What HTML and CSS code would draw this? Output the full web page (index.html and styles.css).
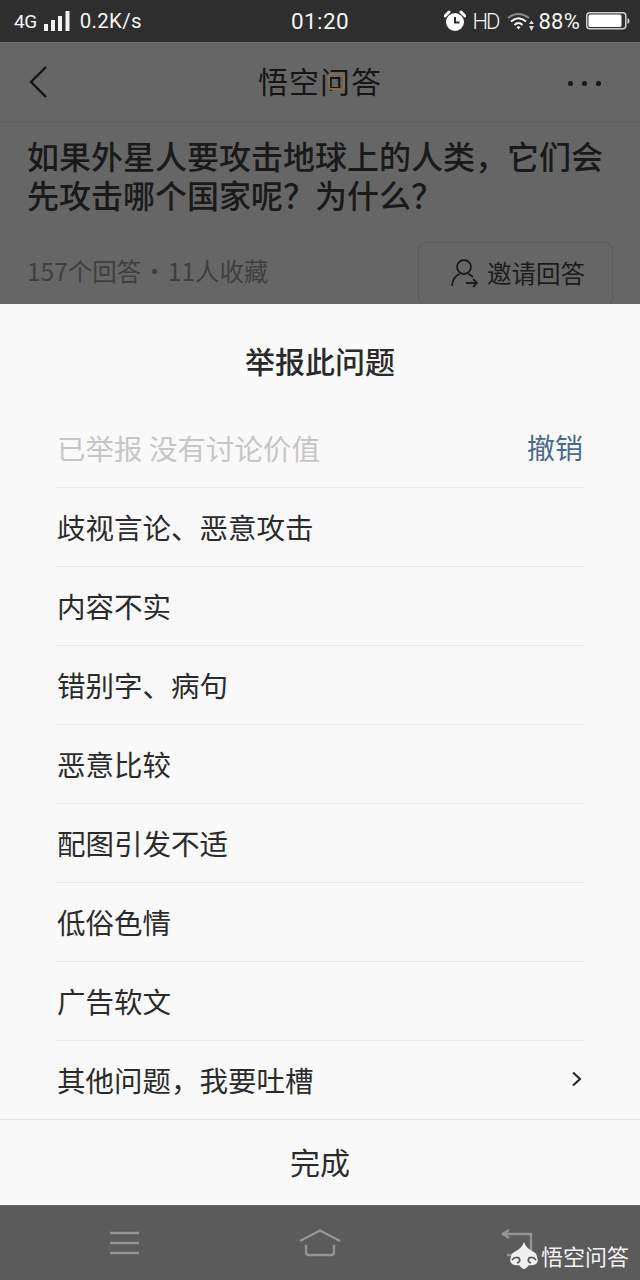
FILE: index.html
```html
<!DOCTYPE html>
<html lang="zh-CN">
<head>
  <meta charset="UTF-8" />
  <title>举报此问题</title>
  <link rel="stylesheet" href="styles.css">
</head>
<body>

  <div class="status-bar">
    <div class="status-left">
      <span class="net">4G</span>
      <svg class="signal" width="26" height="20" viewBox="0 0 26 20" fill="#f2f2f2">
        <rect x="0" y="13" width="4" height="7"/>
        <rect x="7" y="9" width="4" height="11"/>
        <rect x="14" y="5" width="4" height="15"/>
        <rect x="21.500" y="0" width="4" height="20"/>
      </svg>
      <span class="speed">0.2K/s</span>
    </div>
    <div class="clock">01:20</div>
    <div class="status-right">
      <svg class="alarm" width="22" height="22" viewBox="0 0 22 22">
        <circle cx="11" cy="12" r="9" fill="#fff"/>
        <path d="M1 6 L5 2 M21 6 L17 2" stroke="#fff" stroke-width="3" stroke-linecap="round"/>
        <path d="M11 7 V12.5 H15.5" stroke="#2e2e2e" stroke-width="2" fill="none"/>
      </svg>
      <span class="hd">HD</span>
      <svg class="wifi" width="27" height="20" viewBox="0 0 27 20" fill="none">
        <path d="M1 7 Q11 -1 22 7" stroke="#8a8a8a" stroke-width="2"/>
        <path d="M4 10.5 Q11.500 4 19 10.500" stroke="#fff" stroke-width="2"/>
        <path d="M7.500 14 Q11.500 10 15.500 14" stroke="#fff" stroke-width="2"/>
        <path d="M9.500 16 L11.500 18.500 L13.500 16 Q11.500 14.500 9.500 16 Z" fill="#fff"/>
        <path d="M24.500 9.500 L27 13 H22 Z M24.500 20 L27 15 H22 Z" fill="#ddd"/>
      </svg>
      <span class="battery-text">88%</span>
      <svg class="battery" width="44" height="20" viewBox="0 0 44 20">
        <rect x="0.750" y="1.750" width="39" height="16" rx="3" fill="none" stroke="#cfcfcf" stroke-width="1.500"/>
        <rect x="2.500" y="3.500" width="33" height="12.500" rx="1.500" fill="#fff"/>
        <path d="M41.500 7 Q43.500 7.500 43.500 10 Q43.500 12.500 41.500 13 Z" fill="#cfcfcf"/>
      </svg>
    </div>
  </div>

  <div class="backdrop">
    <div class="topbar">
      <svg class="back" width="20" height="34" viewBox="0 0 20 34" fill="none">
        <path d="M18 2 L3 17 L18 32" stroke="#161616" stroke-width="2.400"/>
      </svg>
      <div class="wordmark">悟空<span class="wen">问</span>答</div>
      <div class="more"><i></i><i></i><i></i></div>
    </div>
    <div class="question">
      <h1>如果外星人要攻击地球上的人类，它们会先攻击哪个国家呢？为什么？</h1>
      <div class="question-meta">
        <span class="counts">157个回答<b class="dot">·</b>11人收藏</span>
        <div class="invite">
          <svg width="28" height="30" viewBox="0 0 28 30" fill="none" stroke="#1c1c1c" stroke-width="1.800">
            <circle cx="13" cy="9" r="7"/>
            <path d="M1 28 Q2 18 9 16 M17 16 Q20 17 22 19"/>
            <path d="M15 25 H26 M22 21 L26 25 L22 29"/>
          </svg>
          <span>邀请回答</span>
        </div>
      </div>
    </div>
  </div>

  <div class="sheet">
    <h2>举报此问题</h2>
    <ul class="reasons">
      <li class="reported"><span>已举报 没有讨论价值</span><a class="undo">撤销</a></li>
      <li>歧视言论、恶意攻击</li>
      <li>内容不实</li>
      <li>错别字、病句</li>
      <li>恶意比较</li>
      <li>配图引发不适</li>
      <li>低俗色情</li>
      <li>广告软文</li>
      <li>
        <span>其他问题，我要吐槽</span>
        <svg class="chevron" width="12" height="16" viewBox="0 0 12 16" fill="none">
          <path d="M2 1.500 L9 8 L2 14.500" stroke="#222" stroke-width="2"/>
        </svg>
      </li>
    </ul>
    <div class="done">完成</div>
  </div>

  <div class="softkeys">
    <svg class="key-menu" width="30" height="24" viewBox="0 0 30 24" stroke="#949494" stroke-width="2.400">
      <path d="M0 2 H29 M0 12 H29 M0 22 H29"/>
    </svg>
    <svg class="key-home" width="44" height="28" viewBox="0 0 44 28" fill="none" stroke="#949494" stroke-width="2.400">
      <path d="M1 12 L21 1.500 L41 12"/>
      <path d="M7 16 V23 Q7 26 10 26 H32 Q35 26 35 23 V16"/>
    </svg>
    <svg class="key-back" width="32" height="28" viewBox="0 0 32 28" fill="none" stroke="#949494" stroke-width="2.400">
      <path d="M1 5 H30 V26 H6"/>
      <path d="M8 1 L2 5 L8 9"/>
    </svg>
    <div class="watermark">
      <svg width="30" height="28" viewBox="0 0 30 28">
        <path d="M15 1 Q17 7 23 10 Q28 12 28 16 Q30 20 27 23 Q24 25 20 24 Q17 28 15 28 Q13 28 10 24 Q6 25 3 23 Q0 20 2 16 Q2 12 7 10 Q13 7 15 1 Z" fill="#f0f0f0"/>
        <path d="M3 19 Q6 15 10 17 Q12 21 8 22 M27 19 Q24 15 20 17 Q18 21 22 22" fill="none" stroke="#5b5b5b" stroke-width="1.800"/>
      </svg>
      <span>悟空问答</span>
    </div>
  </div>

</body>
</html>
```

FILE: styles.css
```css
* {
  box-sizing: border-box;
}

html, body {
  margin: 0;
  padding: 0;
}

body {
  width: 640px;
  height: 1280px;
  overflow: hidden;
  display: flex;
  flex-direction: column;
  font-family: "Noto Sans CJK SC", "Noto Sans", sans-serif;
  background-color: #666;
  color: #222;
}

/* status bar */
.status-bar {
  height: 42px;
  flex: none;
  position: relative;
  display: flex;
  justify-content: space-between;
  align-items: center;
  padding: 0 10px 0 14px;
  background-color: #2e2e2e;
  color: #f4f4f4;
  font-family: Roboto, "Liberation Sans", sans-serif;
}

.status-left, .status-right {
  display: flex;
  align-items: center;
}

.net {
  font-size: 19px;
  letter-spacing: -0.5px;
}

.signal {
  margin: 0 0 0 7px;
}

.speed {
  font-size: 20.500px;
  margin-left: 10px;
  letter-spacing: 0.3px;
}

.clock {
  position: absolute;
  left: 0;
  right: 0;
  text-align: center;
  font-size: 22.500px;
  letter-spacing: 0.4px;
}

.alarm {
  margin-right: 7px;
}

.hd {
  font-size: 22px;
  font-weight: 300;
  letter-spacing: -2px;
  margin-right: 8px;
}

.wifi {
  margin-right: 5px;
}

.battery-text {
  font-size: 22px;
  margin-right: 6px;
  letter-spacing: 0.2px;
}

/* dimmed page behind the sheet */
.backdrop {
  height: 262px;
  flex: none;
  overflow: hidden;
  background-color: #666;
}

.topbar {
  height: 80px;
  position: relative;
  display: flex;
  align-items: center;
  justify-content: center;
  border-bottom: 1px solid #5e5e5e;
  border-top: 1px solid #6f6f6f;
}

.back {
  position: absolute;
  left: 28px;
  top: 22px;
}

.wordmark {
  margin-top: -4px;
  font-size: 30px;
  font-weight: 400;
  letter-spacing: 1px;
  color: #161616;
}

.wen {
  position: relative;
}

.wen::after {
  content: "";
  position: absolute;
  left: 8px;
  top: 15px;
  width: 13px;
  height: 13px;
  border: 2px solid #8a6a45;
  border-radius: 3px;
}

.more {
  position: absolute;
  right: 39px;
  top: 38px;
  display: flex;
  gap: 9px;
}

.more i {
  width: 5px;
  height: 5px;
  border-radius: 50%;
  background-color: #161616;
}

.question {
  padding: 14px 27px 0;
}

.question h1 {
  margin: 0;
  font-size: 32px;
  line-height: 39px;
  font-weight: 500;
  color: #1a1a1a;
}

.question-meta {
  display: flex;
  align-items: flex-start;
  justify-content: space-between;
  margin-top: 28px;
}

.counts {
  font-size: 24.500px;
  line-height: 34px;
  margin-top: 12px;
  color: #3f3f3f;
}

.dot {
  font-weight: 400;
  margin: 0 1px;
}

.invite {
  width: 195px;
  height: 64px;
  flex: none;
  display: flex;
  align-items: center;
  justify-content: center;
  gap: 8px;
  padding: 0 0 2px 5px;
  border: 1px solid #5c5c5c;
  border-radius: 8px;
  font-size: 24.500px;
  line-height: 60px;
  color: #1c1c1c;
}

/* report sheet */
.sheet {
  height: 901px;
  flex: none;
  display: flex;
  flex-direction: column;
  background-color: #f9f9f9;
}

.sheet h2 {
  margin: 0;
  height: 105px;
  padding-top: 31px;
  text-align: center;
  font-size: 30px;
  line-height: 50px;
  font-weight: 500;
  color: #2a2a2a;
}

.reasons {
  list-style: none;
  margin: 0 56px;
  padding: 0;
  height: 710px;
}

.reasons li {
  height: 79px;
  display: flex;
  align-items: center;
  justify-content: space-between;
  padding: 0 1px 2px 1px;
  font-size: 28.500px;
  color: #2b2b2b;
  border-bottom: 1px solid #e9e9e9;
}

.reasons li:last-child {
  height: 78px;
  border-bottom: none;
}

.reasons .reported {
  color: #c6c6c6;
}

.undo {
  font-size: 28px;
  color: #4b6a8f;
}

.done {
  flex: 1;
  display: flex;
  align-items: center;
  justify-content: center;
  padding-bottom: 3px;
  font-size: 30px;
  color: #2b2b2b;
  border-top: 1px solid #e3e3e3;
}

/* soft keys */
.softkeys {
  flex: 1;
  position: relative;
  display: flex;
  align-items: center;
  background-color: #5b5b5b;
  border-top: 1px solid #6a6a6a;
}

.key-menu {
  margin-left: 110px;
}

.key-home {
  margin-left: 159px;
}

.key-back {
  margin-left: 158px;
}

.watermark {
  position: absolute;
  left: 509px;
  top: 33px;
  display: flex;
  align-items: center;
  gap: 2px;
  color: #f2f2f2;
  font-size: 22px;
  font-weight: 400;
}
```
